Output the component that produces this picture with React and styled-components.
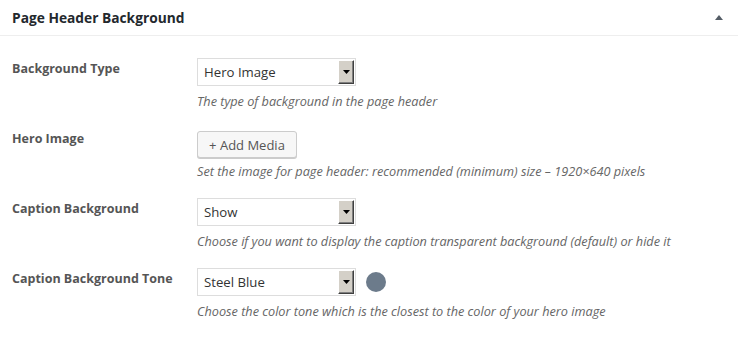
import React from "react";
import styled, { createGlobalStyle } from "styled-components";

const GlobalStyle = createGlobalStyle`
  body {
    margin: 0;
    background: #fff;
    font-family: "Open Sans", "Noto Sans", sans-serif;
    color: #444;
  }
`;

const fields = [
  {
    label: "Background Type",
    kind: "select",
    value: "Hero Image",
    help: "The type of background in the page header",
  },
  {
    label: "Hero Image",
    kind: "media",
    help: "Set the image for page header: recommended (minimum) size \u2013 1920\u00d7640 pixels",
  },
  {
    label: "Caption Background",
    kind: "select",
    value: "Show",
    help: "Choose if you want to display the caption transparent background (default) or hide it",
  },
  {
    label: "Caption Background Tone",
    kind: "select",
    value: "Steel Blue",
    swatch: "#6c7b8b",
    help: "Choose the color tone which is the closest to the color of your hero image",
  },
];

function Dropdown({ value }) {
  return (
    <SelectBox>
      <SelectValue>{value}</SelectValue>
      <SelectArrow>
        <svg width="7" height="4" viewBox="0 0 7 4">
          <path d="M0 0h7L3.5 4z" fill="#000" />
        </svg>
      </SelectArrow>
    </SelectBox>
  );
}

export default function App() {
  return (
    <>
      <GlobalStyle />
      <Panel>
        <Header>
          <Title>Page Header Background</Title>
          <Toggle />
        </Header>
        <Body>
          {fields.map((f) => (
            <Row key={f.label}>
              <Label>{f.label}</Label>
              <Field>
                <Controls>
                  {f.kind === "media" ? (
                    <MediaButton>+ Add Media</MediaButton>
                  ) : (
                    <Dropdown value={f.value} />
                  )}
                  {f.swatch && <Swatch $color={f.swatch} />}
                </Controls>
                <Help $media={f.kind === "media"}>{f.help}</Help>
              </Field>
            </Row>
          ))}
        </Body>
      </Panel>
    </>
  );
}

const Panel = styled.div`
  width: 738px;
  height: 341px;
  background: #fff;
  overflow: hidden;
`;

const Header = styled.div`
  height: 36px;
  box-sizing: border-box;
  border-bottom: 1px solid #eeeeee;
  display: flex;
  align-items: center;
  justify-content: space-between;
  padding: 0 15px 0 12px;
`;

const Title = styled.h2`
  margin: 0;
  font-size: 13.75px;
  font-weight: 700;
  color: #23282d;
  line-height: 1;
`;

const Toggle = styled.span`
  width: 0;
  height: 0;
  border-left: 4px solid transparent;
  border-right: 4px solid transparent;
  border-bottom: 5px solid #555d66;
`;

const Body = styled.div`
  display: flex;
  flex-direction: column;
  gap: 18px;
  padding: 22px 12px 0;
`;

const Row = styled.div`
  display: grid;
  grid-template-columns: 185px 1fr;
  align-items: start;
`;

const Label = styled.div`
  font-size: 12.5px;
  font-weight: 700;
  color: #555;
  padding-top: 2px;
  line-height: 18px;
`;

const Field = styled.div`
  display: flex;
  flex-direction: column;
`;

const Controls = styled.div`
  display: flex;
  align-items: center;
  gap: 10px;
`;

const SelectBox = styled.div`
  width: 159px;
  height: 28px;
  box-sizing: border-box;
  border: 1px solid #dddddd;
  display: flex;
  background: #fff;
`;

const SelectValue = styled.span`
  flex: 1;
  padding-left: 6px;
  font-size: 13.2px;
  line-height: 26px;
  color: #333;
`;

const SelectArrow = styled.span`
  width: 16px;
  margin: 1px 1px 1px 0;
  box-sizing: border-box;
  background: #d4d0c8;
  border-top: 1px solid #fff;
  border-left: 1px solid #fff;
  border-right: 1px solid #404040;
  border-bottom: 1px solid #404040;
  box-shadow: inset -1px -1px 0 #808080;
  display: flex;
  align-items: center;
  justify-content: center;
`;

const MediaButton = styled.button`
  height: 27px;
  width: 100px;
  margin-top: 3px;
  box-sizing: border-box;
  padding: 0 10px;
  border: 1px solid #cccccc;
  border-radius: 3px;
  background: #f7f7f7;
  box-shadow: 0 1px 0 #cccccc;
  font-family: inherit;
  font-size: 13px;
  color: #555;
  cursor: pointer;
`;

const Swatch = styled.span`
  width: 20px;
  height: 20px;
  border-radius: 50%;
  background: ${(p) => p.$color};
`;

const Help = styled.p`
  margin: ${(p) => (p.$media ? "4px" : "6px")} 0 0;
  font-size: 12.7px;
  font-style: italic;
  color: #666;
  line-height: 18px;
`;
